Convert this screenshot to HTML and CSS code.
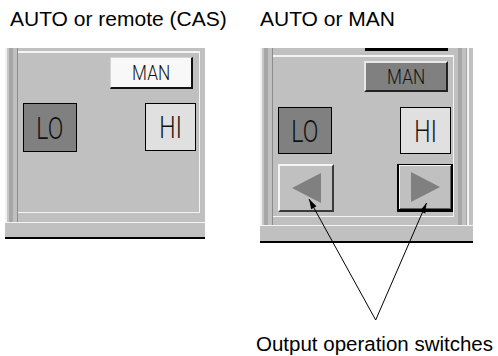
FILE: index.html
```html
<!DOCTYPE html>
<html lang="en">
<head>
<meta charset="utf-8" />
<title>Output operation switches</title>
<link rel="stylesheet" href="styles.css">
</head>
<body>
<div class="figure">
  <div class="col col-cas">
    <div class="title">AUTO or remote (CAS)</div>
    <div class="panel">
      <div class="panel-body">
        <div class="stripes"></div>
        <div class="main">
          <div class="inner">
            <div class="row row-top">
              <div class="man man-off"><span class="txt">MAN</span></div>
            </div>
            <div class="row row-lamps">
              <div class="lamp lo"><span class="txt">LO</span></div>
              <div class="lamp hi"><span class="txt">HI</span></div>
            </div>
          </div>
        </div>
      </div>
      <div class="panel-foot"></div>
    </div>
  </div>

  <div class="col col-man">
    <div class="title">AUTO or MAN</div>
    <div class="panel">
      <div class="panel-body">
        <div class="stripes"></div>
        <div class="main">
          <div class="cutoff"></div>
          <div class="inner">
            <div class="row row-top">
              <div class="man man-on"><span class="txt">MAN</span></div>
            </div>
            <div class="row row-lamps">
              <div class="lamp lo"><span class="txt">LO</span></div>
              <div class="lamp hi"><span class="txt">HI</span></div>
            </div>
            <div class="row row-arrows">
              <div class="arrow-btn raised">
                <svg width="29" height="30" viewBox="0 0 29 30"><polygon points="0,15 29,0 29,30" fill="#808080"/></svg>
              </div>
              <div class="arrow-btn focused">
                <svg width="29" height="30" viewBox="0 0 29 30"><polygon points="29,15 0,0 0,30" fill="#808080"/></svg>
              </div>
            </div>
          </div>
        </div>
        <div class="stripes stripes-right"></div>
      </div>
      <div class="panel-foot"></div>
    </div>
  </div>
</div>

<p class="caption">Output operation switches</p>

<svg class="callout" width="498" height="356" viewBox="0 0 498 356">
  <polyline points="309,199 375.7,320 426.5,203" fill="none" stroke="#000" stroke-width="1"/>
  <polygon points="309,199 316.5,206.3 311.2,209.2" fill="#000"/>
  <polygon points="426.5,203 425.3,213.4 419.8,211" fill="#000"/>
</svg>
</body>
</html>
```

FILE: styles.css
```css
body {
  margin: 0;
  width: 498px;
  height: 356px;
  background-color: #fff;
  font-family: "Liberation Sans", Arial, sans-serif;
  color: #000;
  overflow: hidden;
}

.figure {
  display: flex;
  gap: 55px;
  padding-left: 5px;
}

.col-cas {
  width: 200px;
}

.col-man {
  width: 213px;
}

.title {
  height: 48px;
  box-sizing: border-box;
  padding-top: 9px;
  font-size: 21px;
  line-height: 20px;
  white-space: nowrap;
}

.col-cas .title {
  padding-left: 5px;
}

/* faceplate */
.panel {
  background-color: #c0c0c0;
}

.panel-body {
  display: flex;
  height: 174px;
}

.col-man .panel-body {
  height: 177px;
}

.stripes {
  width: 13px;
  flex: none;
  background: linear-gradient(to right, #f2f2f2 0 2px, #c6c6c6 2px 4px, #a6a6a6 4px 8px, #c0c0c0 8px 12px, #8c8c8c 12px 13px);
}

.stripes-right {
  width: 19px;
  background: linear-gradient(to right, #c0c0c0 0 4px, #a6a6a6 4px 8px, #c0c0c0 8px 12px, #a6a6a6 12px 13px, #f2f2f2 13px 15px, #c0c0c0 15px 19px);
}

.main {
  flex: 1;
  display: flex;
  flex-direction: column;
  padding: 3px 5px 9px 0;
}

.col-man .main {
  padding: 0 0 8px 0;
}

.cutoff {
  width: 83px;
  height: 3px;
  margin: 0 0 4px 92px;
  background-color: #000;
}

.inner {
  flex: 1;
  display: flex;
  flex-direction: column;
  padding: 4px 0 0 5px;
  border-top: 2px solid #f4f4f4;
  border-right: 1px solid #f4f4f4;
  border-bottom: 1px solid #f4f4f4;
}

.panel-foot {
  height: 14px;
  border-top: 1px solid #f4f4f4;
  border-bottom: 2px solid #000;
}

.col-man .panel-foot {
  height: 15px;
}

.row {
  display: flex;
  justify-content: space-between;
  align-items: flex-start;
}

.row-top {
  justify-content: flex-end;
}

.row-lamps {
  margin-top: 14px;
}

.col-man .row-lamps {
  margin-top: 15px;
}

.row-arrows {
  margin-top: 10px;
}

/* buttons and lamps */
.txt {
  display: inline-block;
  font-family: Roboto, "Liberation Sans", sans-serif;
  font-weight: 300;
  line-height: 1;
}

.man {
  box-sizing: border-box;
  display: flex;
  align-items: center;
  justify-content: center;
  font-size: 20px;
  color: #111;
}

.man .txt {
  transform: scaleX(0.86);
}

.man-off {
  width: 83px;
  height: 32px;
  margin-right: 6px;
  background-color: #f8f8f8;
  border-top: 1px solid #d4d4d4;
  border-left: 1px solid #d4d4d4;
  border-right: 2px solid #111;
  border-bottom: 2px solid #111;
}

.man-on {
  width: 84px;
  height: 31px;
  margin-right: 5px;
  background-color: #808080;
  border-top: 2px solid #e8e8e8;
  border-left: 2px solid #e8e8e8;
  border-right: 2px solid #222;
  border-bottom: 2px solid #222;
}

.lamp {
  box-sizing: border-box;
  display: flex;
  align-items: center;
  justify-content: center;
  border: 1px solid #000;
  font-size: 32px;
  color: #111;
}

.lamp .txt {
  transform: scaleX(0.72);
}

.lo {
  width: 54px;
  height: 49px;
  background-color: #808080;
}

.hi {
  width: 51px;
  height: 48px;
  margin-right: 3px;
  background-color: #e0e0e0;
}

.col-man .lo,
.col-man .hi {
  height: 47px;
}

.col-man .hi {
  margin-right: 2px;
}

.arrow-btn {
  box-sizing: border-box;
  width: 56px;
  height: 48px;
  display: flex;
  align-items: center;
  justify-content: center;
  background-color: #c0c0c0;
}

.raised {
  border-top: 2px solid #f4f4f4;
  border-left: 2px solid #f4f4f4;
  border-right: 2px solid #3a3a3a;
  border-bottom: 2px solid #3a3a3a;
}

.focused {
  border-top: 1px solid #000;
  border-left: 2px solid #000;
  border-right: 2px solid #000;
  border-bottom: 3px solid #000;
  box-shadow: inset 1px 1px #f4f4f4, inset -1px -1px #606060;
}

.caption {
  margin: 91px 0 0 0;
  padding-left: 256px;
  font-size: 20.5px;
  line-height: 20px;
  white-space: nowrap;
}

.callout {
  position: absolute;
  left: 0;
  top: 0;
  pointer-events: none;
}
```
